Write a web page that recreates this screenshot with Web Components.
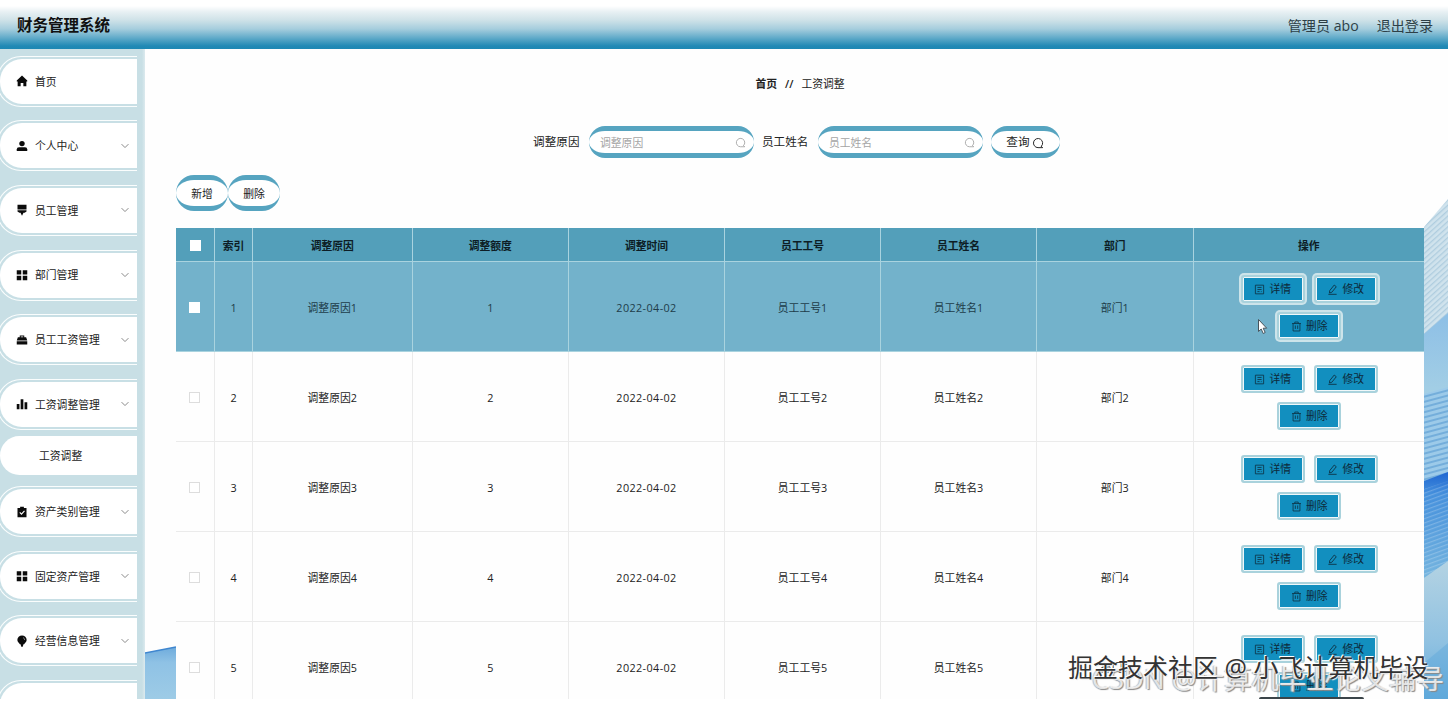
<!DOCTYPE html>
<html lang="zh-CN">
<head>
<meta charset="utf-8">
<title>财务管理系统</title>
<style>
    body {
        margin: 0;
        height: 702px;
        overflow: hidden;
        background: #fff;
        color: #222;
        font: 10.8px/1.4 "Open Sans", "Noto Sans CJK SC", sans-serif;
        --blue: #56a4c0;
        --line: #ebebeb;
    }
</style>
</head>
<body>

<app-shell>
    <top-bar slot="header" title="财务管理系统">
        <span>管理员 abo</span>
        <span>退出登录</span>
    </top-bar>
    <side-menu slot="menu">
        <menu-item icon="home" leaf>首页</menu-item>
        <menu-item icon="user">个人中心</menu-item>
        <menu-item icon="brush">员工管理</menu-item>
        <menu-item icon="grid">部门管理</menu-item>
        <menu-item icon="case">员工工资管理</menu-item>
        <menu-item icon="chart">工资调整管理</menu-item>
        <menu-sub>工资调整</menu-sub>
        <menu-item icon="check">资产类别管理</menu-item>
        <menu-item icon="grid">固定资产管理</menu-item>
        <menu-item icon="bulb">经营信息管理</menu-item>
        <menu-item leaf></menu-item>
    </side-menu>
    <bread-crumb><b slot="home">首页</b>工资调整</bread-crumb>
    <search-bar>
        <search-field label="调整原因"></search-field>
        <search-field label="员工姓名"></search-field>
        <pill-button style="--w: 69px; --h: 32px; --size: 11.6px">查询 <ui-icon name="search" size="12"></ui-icon></pill-button>
    </search-bar>
    <tool-row>
        <pill-button>新增</pill-button>
        <pill-button>删除</pill-button>
    </tool-row>
    <data-table></data-table>
</app-shell>
<water-mark></water-mark>

<script>
const icons = {
    home: '<path fill="currentColor" d="M8 .8 1 7.300V8.500h1.200V15h4V10.500h3.600V15h4V8.500H15V7.300z"/>',
    user: '<circle cx="8" cy="4.8" r="3.6" fill="currentColor"/><path fill="currentColor" d="M1 14.5v-2.2Q1 9.7 4 9.7h8q3 0 3 2.6v2.2z"/>',
    brush: '<path fill="currentColor" d="M2 1h12v6.300H2zM2 8.200h12v1.800L11.500 11.500H10L8 15.500 6 11.500H4.500L2 10z"/>',
    grid: '<path fill="currentColor" d="M1 1.500h6v5.900H1zM9 1.500h6v5.900H9zM1 9h6v5.900H1zM9 9h6v5.900H9z"/>',
    case: '<path fill="currentColor" d="M5 2h6v2.400h2.500L15 8.600H1l1.500-4.200H5zM6.300 3.200v1.200h3.400V3.200zM1 9.700h14V14H1z"/>',
    chart: '<path fill="currentColor" d="M1 8h3.600v7H1zM6.200 1.500h3.600V15H6.200zM11.400 5.500H15V15h-3.600z"/>',
    check: '<path fill="currentColor" d="M2 2.500h3.500V1h5v1.500H14V15H2z"/><path d="m5 8.500 2.300 2.300L11.300 6.500" fill="none" stroke="#fff" stroke-width="1.500"/>',
    bulb: '<path fill="currentColor" d="M8 .5a6.200 6.200 0 0 1 6.200 6.200c0 2.800-2.200 3.800-3.400 5.500H5.200c-1.200-1.700-3.400-2.700-3.400-5.500A6.200 6.200 0 0 1 8 .5M6 12h4l-1 3.500H7z"/><path d="M9.500 3.500q2 1 2 3" fill="none" stroke="#fff" stroke-width=".7"/>',
    down: '<path d="m2.500 5 5.500 5.500L13.500 5" fill="none" stroke="currentColor" stroke-width="1.600"/>',
    search: '<path d="M12.300 12.500A6.100 6.100 0 1 0 8 14.200h6.200l-2-2" fill="none" stroke="currentColor" stroke-width="1.300"/>',
    doc: '<path d="M2 1.700h12v12.600H2zM5 5h6M5 8h6M5 11h3M10 11h1" fill="none" stroke="currentColor" stroke-width="1.100"/>',
    edit: '<path d="m4 9.500 6.500-8 3 2.500L7 12l-3.500 1zM2 15h12" fill="none" stroke="currentColor" stroke-width="1.200"/>',
    trash: '<path d="M1.500 3.700h13M5.500 3.500V1.500h5v2M3 3.700V14.500h10V3.700M6.300 6.500v5M9.700 6.500v5" fill="none" stroke="currentColor" stroke-width="1.100"/>'
};

function shadow(el, html) {
    el.attachShadow({ mode: "open" }).innerHTML = html;
}

class UiIcon extends HTMLElement {
    connectedCallback() {
        const size = this.getAttribute("size") || 12;
        shadow(this, `
            <style>
                :host { display: inline-flex; width: ${size}px; height: ${size}px; flex: none; }
            </style>
            <svg viewBox="0 0 16 16" width="${size}" height="${size}">${icons[this.getAttribute("name")] || ""}</svg>
        `);
    }
}

class AppShell extends HTMLElement {
    connectedCallback() {
        shadow(this, `
            <style>
                :host { display: grid; grid-template: 49px 650px / 145px 1303px; height: 699px; overflow: hidden; }
                header { grid-column: 1 / 3; }
                aside { overflow: hidden; background: linear-gradient(90deg, #c8dfe5 142px, #dceaee); }
                main {
                    position: relative;
                    display: flex;
                    flex-direction: column;
                    padding: 0 24px 0 31px;
                    overflow: hidden;
                    background: #fefefe;
                }
                .bg { position: absolute; bottom: 0; }
                .left { left: 0; }
                .right { right: 0; }
            </style>
            <header><slot name="header"></slot></header>
            <aside><slot name="menu"></slot></aside>
            <main>
                <svg class="bg left" width="31" height="53" viewBox="0 0 31 53">
                    <defs>
                        <linearGradient id="l" x2="0" y2="1"><stop stop-color="#6eabdc"/><stop offset=".3" stop-color="#8fc2e5"/><stop offset="1" stop-color="#9dcbe6"/></linearGradient>
                    </defs>
                    <path d="M0 7 31 1v52H0z" fill="url(#l)"/>
                    <path d="M0 7 31 1" stroke="#3f86cf" stroke-width="1.500"/>
                </svg>
                <svg class="bg right" width="24" height="500" viewBox="0 0 24 500">
                    <defs>
                        <pattern id="p1" width="4" height="4" patternUnits="userSpaceOnUse" patternTransform="rotate(-42)"><path fill="#d0e3ed" d="M0 0h4v4H0z"/><path fill="#afcddf" d="M0 0h4v1.300H0z"/></pattern>
                        <pattern id="p2" width="5" height="5" patternUnits="userSpaceOnUse" patternTransform="rotate(-15)"><path fill="#9ccae9" d="M0 0h5v5H0z"/><path fill="#74aedb" d="M0 0h5v2H0z"/></pattern>
                        <pattern id="p3" width="4" height="4" patternUnits="userSpaceOnUse" patternTransform="rotate(-20)"><path fill="#fff" fill-opacity=".22" d="M0 0h4v1.200H0z"/></pattern>
                        <linearGradient id="g1" x2="0" y2="1"><stop stop-color="#8dbfe6"/><stop offset="1" stop-color="#a5d0e5"/></linearGradient>
                        <linearGradient id="g2" x2="0" y2="1"><stop stop-color="#1f66d2"/><stop offset=".2" stop-color="#4590dc"/><stop offset="1" stop-color="#78b7df"/></linearGradient>
                        <linearGradient id="g3" x2="0" y2="1"><stop stop-color="#b4d3e3"/><stop offset=".6" stop-color="#8fc1e1"/><stop offset="1" stop-color="#63abdb"/></linearGradient>
                    </defs>
                    <path d="M0 28 24 0v120L0 140z" fill="url(#p1)"/>
                    <path d="M0 135 24 114v80L0 200z" fill="url(#g1)"/>
                    <path d="M0 195 24 188v90L0 286z" fill="url(#p2)"/>
                    <path d="M0 282 24 273v95L0 384z" fill="url(#g2)"/>
                    <path d="M0 290 24 282v86L0 384z" fill="url(#p3)"/>
                    <path d="M0 379 24 362v138H0z" fill="url(#g3)"/>
                    <path d="M0 464 24 444v56H0z" fill="#59a4da" opacity=".4"/>
                </svg>
                <slot></slot>
            </main>
        `);
    }
}

class TopBar extends HTMLElement {
    connectedCallback() {
        shadow(this, `
            <style>
                :host {
                    display: flex;
                    align-items: center;
                    height: 49px;
                    box-sizing: border-box;
                    padding: 3px 15px 0 17px;
                    background: linear-gradient(#fff 6px, #e7f0f3 12px, #cfe2e8 20px, #a5cddd 29px, #5faac9 38px, #2089b5 46px, #1d87b3);
                }
                h1 { margin: 0 auto 0 0; font-size: 15.500px; color: #111; }
                div { display: flex; gap: 18px; font-size: 14.100px; color: #2d3f47; }
            </style>
            <h1>${this.getAttribute("title")}</h1>
            <div><slot></slot></div>
        `);
        this.removeAttribute("title");
    }
}

class SideMenu extends HTMLElement {
    connectedCallback() {
        shadow(this, `
            <style>
                :host { display: flex; flex-direction: column; gap: 13.650px; padding-top: 6.600px; }
            </style>
            <slot></slot>
        `);
    }
}

class MenuItem extends HTMLElement {
    connectedCallback() {
        const icon = this.getAttribute("icon");
        shadow(this, `
            <style>
                /* thin white rim around a white tab, open on the right */
                :host {
                    display: block;
                    flex: none;
                    width: 140px;
                    height: 51px;
                    box-sizing: border-box;
                    margin-left: -3px;
                    padding: 2px 0 2px 2px;
                    border: 1px solid #fafdfd;
                    border-right: 0;
                    border-radius: 24px 0 0 24px;
                }
                div {
                    display: flex;
                    align-items: center;
                    height: 45px;
                    box-sizing: border-box;
                    padding: 0 7px 0 16px;
                    border-radius: 22px 0 0 22px;
                    background: #fff;
                }
                .icon { color: #0b0b0b; margin-right: 7px; }
                .down { color: #8a8a8a; margin-left: auto; }
            </style>
            <div>
                ${icon ? `<ui-icon class="icon" name="${icon}" size="12"></ui-icon>` : ""}
                <slot></slot>
                ${this.hasAttribute("leaf") ? "" : '<ui-icon class="down" name="down" size="10"></ui-icon>'}
            </div>
        `);
    }
}

class MenuSub extends HTMLElement {
    connectedCallback() {
        shadow(this, `
            <style>
                :host {
                    display: flex;
                    flex: none;
                    align-items: center;
                    width: 137px;
                    height: 39px;
                    box-sizing: border-box;
                    margin: -7px 0 -3px;
                    padding-left: 39px;
                    border-radius: 20px 0 0 20px;
                    background: #fff;
                }
            </style>
            <slot></slot>
        `);
    }
}

class BreadCrumb extends HTMLElement {
    connectedCallback() {
        shadow(this, `
            <style>
                :host { display: flex; justify-content: center; gap: 8px; margin-top: 27px; height: 16px; line-height: 16px; z-index: 1; }
                ::slotted(b) { font-weight: 600; }
                i { font-style: normal; font-weight: 600; }
            </style>
            <slot name="home"></slot><i>//</i><slot></slot>
        `);
    }
}

class SearchBar extends HTMLElement {
    connectedCallback() {
        shadow(this, `
            <style>
                :host { display: flex; justify-content: center; gap: 8px; margin: 34px 7px 0 0; }
            </style>
            <slot></slot>
        `);
    }
}

class SearchField extends HTMLElement {
    connectedCallback() {
        const label = this.getAttribute("label");
        shadow(this, `
            <style>
                :host { display: flex; align-items: center; gap: 9.500px; font-size: 11.600px; }
                div {
                    display: flex;
                    align-items: center;
                    justify-content: space-between;
                    width: 165px;
                    height: 32px;
                    box-sizing: border-box;
                    padding: 1px 8px 0 11px;
                    border: solid var(--blue);
                    border-width: 5px 0;
                    border-radius: 16px;
                    background: #fff;
                    color: #a5a5a5;
                    font-size: 10.800px;
                }
            </style>
            <span>${label}</span>
            <div><span>${label}</span><ui-icon name="search" size="11"></ui-icon></div>
        `);
    }
}

class PillButton extends HTMLElement {
    connectedCallback() {
        shadow(this, `
            <style>
                :host {
                    display: flex;
                    align-items: center;
                    justify-content: center;
                    gap: 3px;
                    width: var(--w, 52px);
                    height: var(--h, 36px);
                    box-sizing: border-box;
                    padding-top: 1px;
                    border: solid var(--blue);
                    border-width: 5px 0;
                    border-radius: 18px;
                    background: #fff;
                    font-size: var(--size, 10.800px);
                }
            </style>
            <slot></slot>
        `);
    }
}

class ToolRow extends HTMLElement {
    connectedCallback() {
        shadow(this, `
            <style>
                :host { display: flex; margin: 17px 0; }
            </style>
            <slot></slot>
        `);
    }
}

class ActionButton extends HTMLElement {
    connectedCallback() {
        shadow(this, `
            <style>
                :host {
                    display: flex;
                    align-items: center;
                    justify-content: center;
                    gap: 4px;
                    width: 64px;
                    height: 28px;
                    box-sizing: border-box;
                    border: 2px solid #a9d2dc;
                    border-radius: 3px;
                    background: #128fbf;
                    box-shadow: inset 0 0 0 1px #f0f8fa, 0 0 0 var(--ring, 0) #cde4ea;
                    color: #0d2a3a;
                }
            </style>
            <ui-icon name="${this.getAttribute("icon")}" size="11"></ui-icon>
            <slot></slot>
        `);
    }
}

class DataTable extends HTMLElement {
    connectedCallback() {
        const heads = ["索引", "调整原因", "调整额度", "调整时间", "员工工号", "员工姓名", "部门", "操作"];
        const rows = [1, 2, 3, 4, 5].map(n => `
            <div class="row ${n === 1 ? "hover" : ""}">
                <div><i></i></div>
                <div>${n}</div>
                <div>调整原因${n}</div>
                <div>${n}</div>
                <div class="date">2022-04-02</div>
                <div>员工工号${n}</div>
                <div>员工姓名${n}</div>
                <div>部门${n}</div>
                <div class="acts">
                    <action-button icon="doc">详情</action-button>
                    <action-button icon="edit">修改</action-button>
                    <action-button icon="trash">删除</action-button>
                </div>
            </div>
        `).join("");
        shadow(this, `
            <style>
                :host { display: block; width: 1248px; flex: none; }
                .row {
                    display: grid;
                    grid-template-columns: 39px 38px 159.500px 156.500px 156px 156px 156px 156.500px 230.500px;
                    height: 90px;
                    background: #fefefe;
                }
                .row > div {
                    display: flex;
                    align-items: center;
                    justify-content: center;
                    box-sizing: border-box;
                    padding-top: 2px;
                    border: solid var(--line);
                    border-width: 0 1px 1px 0;
                }
                .row > div:first-child { padding-right: 2px; }
                .row > div:last-child { border-right: 0; }
                .head { height: 34px; background: #539fba; font-weight: bold; color: #0d1d25; --line: #a9d3df; }
                .head > div:first-child { padding-right: 0; }
                .hover { background: #73b2cb; color: #203c49; --line: #a9d3df; --ring: 2px; }
                i { width: 11px; height: 11px; box-sizing: border-box; border: 1px solid #ddd; background: #fff; }
                .head i, .hover i { border-color: #fff; }
                .date { letter-spacing: .400px; }
                .row > .acts { flex-wrap: wrap; align-content: center; gap: 9px; padding: 2px 39px 0 40px; }
            </style>
            <div class="row head"><div><i></i></div>${heads.map(h => `<div>${h}</div>`).join("")}</div>
            ${rows}
        `);
    }
}

class WaterMark extends HTMLElement {
    connectedCallback() {
        shadow(this, `
            <style>
                :host { position: absolute; inset: 0 0 auto; height: 702px; overflow: hidden; pointer-events: none; }
                span { position: absolute; white-space: nowrap; line-height: 36px; }
                .back {
                    right: 5px;
                    top: 661px;
                    font-size: 27.500px;
                    color: rgba(255, 255, 255, .75);
                    text-shadow: 1px 1px 1px #888, -1px 0 1px #bbb;
                }
                .front {
                    left: 1068px;
                    top: 649px;
                    font-size: 25px;
                    color: #333;
                    text-shadow: -1px -1px 0 #fff, 1px 1px 1px #eee;
                }
                .bar { position: absolute; left: 1259px; top: 697px; width: 105px; height: 2px; border-radius: 3px 3px 0 0; background: #3a4449; }
                svg { position: absolute; left: 1257px; top: 318px; }
            </style>
            <div class="bar"></div>
            <span class="back">CSDN @计算机毕业论文辅导</span>
            <span class="front">掘金技术社区 @ 小飞计算机毕设</span>
            <svg width="12" height="18" viewBox="0 0 12 18"><path d="M1.500 1.500v12l2.700-2.500 2 4.500 2-1-2-4.300h3.500z" fill="#fff" stroke="#48545c"/></svg>
        `);
    }
}

customElements.define("ui-icon", UiIcon);
customElements.define("app-shell", AppShell);
customElements.define("top-bar", TopBar);
customElements.define("side-menu", SideMenu);
customElements.define("menu-item", MenuItem);
customElements.define("menu-sub", MenuSub);
customElements.define("bread-crumb", BreadCrumb);
customElements.define("search-bar", SearchBar);
customElements.define("search-field", SearchField);
customElements.define("pill-button", PillButton);
customElements.define("tool-row", ToolRow);
customElements.define("action-button", ActionButton);
customElements.define("data-table", DataTable);
customElements.define("water-mark", WaterMark);
</script>
</body>
</html>
